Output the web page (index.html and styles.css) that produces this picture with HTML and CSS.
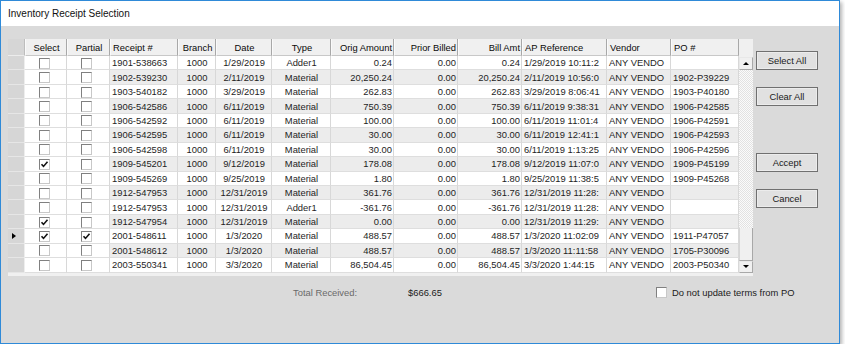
FILE: index.html
```html
<!DOCTYPE html>
<html lang="en">
	<head>
		<meta charset="utf-8"/>
		<title>Inventory Receipt Selection</title>
		<link rel="stylesheet" href="styles.css">
	</head>
	<body>
		<div class="window">
			<div class="titlebar">Inventory Receipt Selection</div>
			<div class="form">
				<div class="mainRow">
					<div class="grid">
						<div class="gridInner">
							<table class="receipts">
								<colgroup>
									<col class="wRow"><col class="wChk"><col class="wPart"><col class="wRcpt"><col class="wBranch"><col class="wDate"><col class="wType"><col class="wAmt"><col class="wPrior"><col class="wBill"><col class="wRef"><col class="wVendor"><col class="wPo">
								</colgroup>
								<thead>
									<tr>
										<th class="rowHead"></th>
										<th class="c">Select</th>
										<th class="c">Partial</th>
										<th class="l">Receipt #</th>
										<th class="c">Branch</th>
										<th class="c">Date</th>
										<th class="c">Type</th>
										<th class="r">Orig Amount</th>
										<th class="r">Prior Billed</th>
										<th class="r">Bill Amt</th>
										<th class="l">AP Reference</th>
										<th class="l">Vendor</th>
										<th class="l">PO #</th>
									</tr>
								</thead>
								<tbody>
									<tr>
										<td class="rowHead"></td>
										<td class="chkCell"><span class="chk"></span></td>
										<td class="chkCell"><span class="chk"></span></td>
										<td>1901-538663</td><td class="c">1000</td><td class="c">1/29/2019</td><td class="c">Adder1</td>
										<td class="r">0.24</td><td class="r">0.00</td><td class="r">0.24</td>
										<td>1/29/2019 10:11:2</td><td>ANY VENDO</td><td></td>
									</tr>
									<tr>
										<td class="rowHead"></td>
										<td class="chkCell"><span class="chk"></span></td>
										<td class="chkCell"><span class="chk"></span></td>
										<td>1902-539230</td><td class="c">1000</td><td class="c">2/11/2019</td><td class="c">Material</td>
										<td class="r">20,250.24</td><td class="r">0.00</td><td class="r">20,250.24</td>
										<td>2/11/2019 10:56:0</td><td>ANY VENDO</td><td>1902-P39229</td>
									</tr>
									<tr>
										<td class="rowHead"></td>
										<td class="chkCell"><span class="chk"></span></td>
										<td class="chkCell"><span class="chk"></span></td>
										<td>1903-540182</td><td class="c">1000</td><td class="c">3/29/2019</td><td class="c">Material</td>
										<td class="r">262.83</td><td class="r">0.00</td><td class="r">262.83</td>
										<td>3/29/2019 8:06:41</td><td>ANY VENDO</td><td>1903-P40180</td>
									</tr>
									<tr>
										<td class="rowHead"></td>
										<td class="chkCell"><span class="chk"></span></td>
										<td class="chkCell"><span class="chk"></span></td>
										<td>1906-542586</td><td class="c">1000</td><td class="c">6/11/2019</td><td class="c">Material</td>
										<td class="r">750.39</td><td class="r">0.00</td><td class="r">750.39</td>
										<td>6/11/2019 9:38:31</td><td>ANY VENDO</td><td>1906-P42585</td>
									</tr>
									<tr>
										<td class="rowHead"></td>
										<td class="chkCell"><span class="chk"></span></td>
										<td class="chkCell"><span class="chk"></span></td>
										<td>1906-542592</td><td class="c">1000</td><td class="c">6/11/2019</td><td class="c">Material</td>
										<td class="r">100.00</td><td class="r">0.00</td><td class="r">100.00</td>
										<td>6/11/2019 11:01:4</td><td>ANY VENDO</td><td>1906-P42591</td>
									</tr>
									<tr>
										<td class="rowHead"></td>
										<td class="chkCell"><span class="chk"></span></td>
										<td class="chkCell"><span class="chk"></span></td>
										<td>1906-542595</td><td class="c">1000</td><td class="c">6/11/2019</td><td class="c">Material</td>
										<td class="r">30.00</td><td class="r">0.00</td><td class="r">30.00</td>
										<td>6/11/2019 12:41:1</td><td>ANY VENDO</td><td>1906-P42593</td>
									</tr>
									<tr>
										<td class="rowHead"></td>
										<td class="chkCell"><span class="chk"></span></td>
										<td class="chkCell"><span class="chk"></span></td>
										<td>1906-542598</td><td class="c">1000</td><td class="c">6/11/2019</td><td class="c">Material</td>
										<td class="r">30.00</td><td class="r">0.00</td><td class="r">30.00</td>
										<td>6/11/2019 1:13:25</td><td>ANY VENDO</td><td>1906-P42596</td>
									</tr>
									<tr>
										<td class="rowHead"></td>
										<td class="chkCell"><span class="chk"><svg class="tick" viewBox="0 0 9 9"><path d="M1.5 4.2l2 2.2 4-4.6"/></svg></span></td>
										<td class="chkCell"><span class="chk"></span></td>
										<td>1909-545201</td><td class="c">1000</td><td class="c">9/12/2019</td><td class="c">Material</td>
										<td class="r">178.08</td><td class="r">0.00</td><td class="r">178.08</td>
										<td>9/12/2019 11:07:0</td><td>ANY VENDO</td><td>1909-P45199</td>
									</tr>
									<tr>
										<td class="rowHead"></td>
										<td class="chkCell"><span class="chk"></span></td>
										<td class="chkCell"><span class="chk"></span></td>
										<td>1909-545269</td><td class="c">1000</td><td class="c">9/25/2019</td><td class="c">Material</td>
										<td class="r">1.80</td><td class="r">0.00</td><td class="r">1.80</td>
										<td>9/25/2019 11:38:5</td><td>ANY VENDO</td><td>1909-P45268</td>
									</tr>
									<tr>
										<td class="rowHead"></td>
										<td class="chkCell"><span class="chk"></span></td>
										<td class="chkCell"><span class="chk"></span></td>
										<td>1912-547953</td><td class="c">1000</td><td class="c">12/31/2019</td><td class="c">Material</td>
										<td class="r">361.76</td><td class="r">0.00</td><td class="r">361.76</td>
										<td>12/31/2019 11:28:</td><td>ANY VENDO</td><td></td>
									</tr>
									<tr>
										<td class="rowHead"></td>
										<td class="chkCell"><span class="chk"></span></td>
										<td class="chkCell"><span class="chk"></span></td>
										<td>1912-547953</td><td class="c">1000</td><td class="c">12/31/2019</td><td class="c">Adder1</td>
										<td class="r">-361.76</td><td class="r">0.00</td><td class="r">-361.76</td>
										<td>12/31/2019 11:28:</td><td>ANY VENDO</td><td></td>
									</tr>
									<tr>
										<td class="rowHead"></td>
										<td class="chkCell"><span class="chk"><svg class="tick" viewBox="0 0 9 9"><path d="M1.5 4.2l2 2.2 4-4.6"/></svg></span></td>
										<td class="chkCell"><span class="chk"></span></td>
										<td>1912-547954</td><td class="c">1000</td><td class="c">12/31/2019</td><td class="c">Material</td>
										<td class="r">0.00</td><td class="r">0.00</td><td class="r">0.00</td>
										<td>12/31/2019 11:29:</td><td>ANY VENDO</td><td></td>
									</tr>
									<tr>
										<td class="rowHead"><span class="curRow"></span></td>
										<td class="chkCell"><span class="chk"><svg class="tick" viewBox="0 0 9 9"><path d="M1.5 4.2l2 2.2 4-4.6"/></svg></span></td>
										<td class="chkCell"><span class="chk"><svg class="tick" viewBox="0 0 9 9"><path d="M1.5 4.2l2 2.2 4-4.6"/></svg></span></td>
										<td>2001-548611</td><td class="c">1000</td><td class="c">1/3/2020</td><td class="c">Material</td>
										<td class="r">488.57</td><td class="r">0.00</td><td class="r">488.57</td>
										<td>1/3/2020 11:02:09</td><td>ANY VENDO</td><td>1911-P47057</td>
									</tr>
									<tr>
										<td class="rowHead"></td>
										<td class="chkCell"><span class="chk"></span></td>
										<td class="chkCell"><span class="chk"></span></td>
										<td>2001-548612</td><td class="c">1000</td><td class="c">1/3/2020</td><td class="c">Material</td>
										<td class="r">488.57</td><td class="r">0.00</td><td class="r">488.57</td>
										<td>1/3/2020 11:11:58</td><td>ANY VENDO</td><td>1705-P30096</td>
									</tr>
									<tr>
										<td class="rowHead"></td>
										<td class="chkCell"><span class="chk"></span></td>
										<td class="chkCell"><span class="chk"></span></td>
										<td>2003-550341</td><td class="c">1000</td><td class="c">3/3/2020</td><td class="c">Material</td>
										<td class="r">86,504.45</td><td class="r">0.00</td><td class="r">86,504.45</td>
										<td>3/3/2020 1:44:15</td><td>ANY VENDO</td><td>2003-P50340</td>
									</tr>
								</tbody>
							</table>
							<div class="vscroll">
								<div class="vscrollHead"></div>
								<div class="arrow up"></div>
								<div class="track"></div>
								<div class="thumb"></div>
								<div class="arrow down"></div>
							</div>
						</div>
						<div class="gridFoot"></div>
					</div>
					<div class="buttons">
						<button class="btn">Select All</button>
						<button class="btn">Clear All</button>
						<button class="btn accept">Accept</button>
						<button class="btn">Cancel</button>
					</div>
				</div>
				<div class="footer">
					<span class="totalLabel">Total Received:</span>
					<span class="totalValue">$666.65</span>
					<label class="option"><span class="chk"></span>Do not update terms from PO</label>
				</div>
			</div>
		</div>
	</body>
</html>
```

FILE: styles.css
```css
body{
	margin: 0;
	background: #fff;
	font-family: "Liberation Sans", Arial, sans-serif;
	color: #222;
}

.window{
	width: 840px;
	height: 344px;
	box-sizing: border-box;
	border: 1px solid #2f8ad8;
	box-shadow: 2px 2px 4px rgba(0, 0, 0, 0.3);
	display: flex;
	flex-direction: column;
}

.titlebar{
	height: 25px;
	line-height: 26px;
	padding-left: 7px;
	font-size: 10px;
	background: #fff;
	color: #111;
}

.form{
	flex: 1;
	background: #dadada;
	padding: 13px 0 0 7px;
}

.mainRow{
	display: flex;
	align-items: flex-start;
}

/* data grid */
.grid{
	width: 745px;
	background: #f0f0f0;
}

.gridInner{
	display: flex;
}

.gridFoot{
	height: 3px;
}

.receipts{
	width: 731px;
	table-layout: fixed;
	border-collapse: separate;
	border-spacing: 0;
	font-size: 9.4px;
	background: #fff;
}

.wRow{ width: 17px; }
.wChk{ width: 42px; }
.wPart{ width: 43px; }
.wRcpt{ width: 68px; }
.wBranch{ width: 38px; }
.wDate{ width: 56px; }
.wType{ width: 59px; }
.wAmt{ width: 63px; }
.wPrior{ width: 64px; }
.wBill{ width: 64px; }
.wRef{ width: 85px; }
.wVendor{ width: 64px; }
.wPo{ width: 68px; }

.receipts th,
.receipts td{
	padding: 0 1px 0 2px;
	white-space: nowrap;
	overflow: hidden;
	box-sizing: border-box;
	vertical-align: middle;
	line-height: 11px;
}

.receipts thead tr{
	height: 17px;
}

.receipts th{
	font-weight: normal;
	color: #0a0a0a;
	background: #f0f0f0;
	border-left: 1px solid #fafafa;
	border-right: 1px solid #a8a8a8;
	border-bottom: 1px solid #c8c8c8;
}

.receipts tbody tr{
	height: 14.45px;
}

.receipts td{
	color: #1e1e1e;
	border-right: 1px solid #d8d8d8;
	border-bottom: 1px solid #dedede;
}

.receipts tbody tr:nth-child(even) td{
	background: #ececec;
}

.receipts tbody tr td.chkCell{
	background: #fff;
	text-align: center;
	padding: 0 3px 0 0;
}

.receipts .rowHead,
.receipts tbody tr td.rowHead{
	background: #d6d6d6;
	border-left: none;
	border-right: 1px solid #eeeeee;
	border-bottom: 1px solid #e6e6e6;
	padding: 0 0 0 4px;
}

.receipts th.rowHead{
	border-right: 1px solid #bdbdbd;
	border-bottom: 1px solid #ececec;
}

.c{ text-align: center; }
.l{ text-align: left; }
.r{ text-align: right; }

.curRow{
	display: block;
	width: 0;
	height: 0;
	border-left: 4px solid #000;
	border-top: 3.5px solid transparent;
	border-bottom: 3.5px solid transparent;
}

.chk{
	display: inline-block;
	width: 11px;
	height: 11px;
	box-sizing: border-box;
	background: #fff;
	border-top: 1px solid #808080;
	border-left: 1px solid #808080;
	border-right: 1px solid #c8c8c8;
	border-bottom: 1px solid #c8c8c8;
	vertical-align: middle;
}

.tick{
	display: block;
	width: 9px;
	height: 9px;
	fill: none;
	stroke: #111;
	stroke-width: 1.6;
}

/* vertical scrollbar */
.vscroll{
	width: 14px;
	display: flex;
	flex-direction: column;
}

.vscrollHead{
	height: 17px;
	background: #f0f0f0;
}

.track{
	flex: 1;
	background: repeating-conic-gradient(#e2e2e2 0 25%, #fbfbfb 0 50%) 0 0 / 2px 2px;
}

.thumb{
	height: 33px;
	background: #f0f0f0;
	border-left: 1px solid #d6d6d6;
	border-right: 1px solid #a8a8a8;
	border-bottom: 1px solid #a8a8a8;
	box-sizing: border-box;
}

.arrow{
	height: 13px;
	box-sizing: border-box;
	background: #f0f0f0;
	border: 1px solid #a8a8a8;
	border-top-color: #e8e8e8;
	border-left-color: #e8e8e8;
	display: flex;
	align-items: center;
	justify-content: center;
}

.arrow.up{
	margin-top: 1px;
}

.arrow.down{
	height: 12px;
}

.arrow::after{
	content: "";
	width: 0;
	height: 0;
	border-left: 3px solid transparent;
	border-right: 3px solid transparent;
}

.arrow.up::after{
	border-bottom: 3px solid #000;
}

.arrow.down::after{
	border-top: 3px solid #000;
}

/* buttons */
.buttons{
	display: flex;
	flex-direction: column;
	gap: 17px;
	margin-left: 3px;
	padding-top: 12px;
}

.btn{
	width: 62px;
	height: 19px;
	padding: 0;
	font-family: "Liberation Sans", Arial, sans-serif;
	font-size: 9.4px;
	color: #1a1a1a;
	background: #e1e1e1;
	border: 1px solid #707070;
	box-shadow: inset 0 0 0 1px #ececec;
}

.accept{
	margin-top: 30px;
}

/* footer */
.footer{
	display: flex;
	align-items: center;
	margin-top: 11px;
	padding-left: 285px;
	font-size: 9.4px;
	line-height: 11px;
}

.totalLabel{
	width: 115px;
	color: #6a6a6a;
}

.totalValue{
	width: 248px;
	color: #1a1a1a;
}

.option{
	display: flex;
	align-items: center;
	gap: 5px;
	color: #1a1a1a;
}
```
